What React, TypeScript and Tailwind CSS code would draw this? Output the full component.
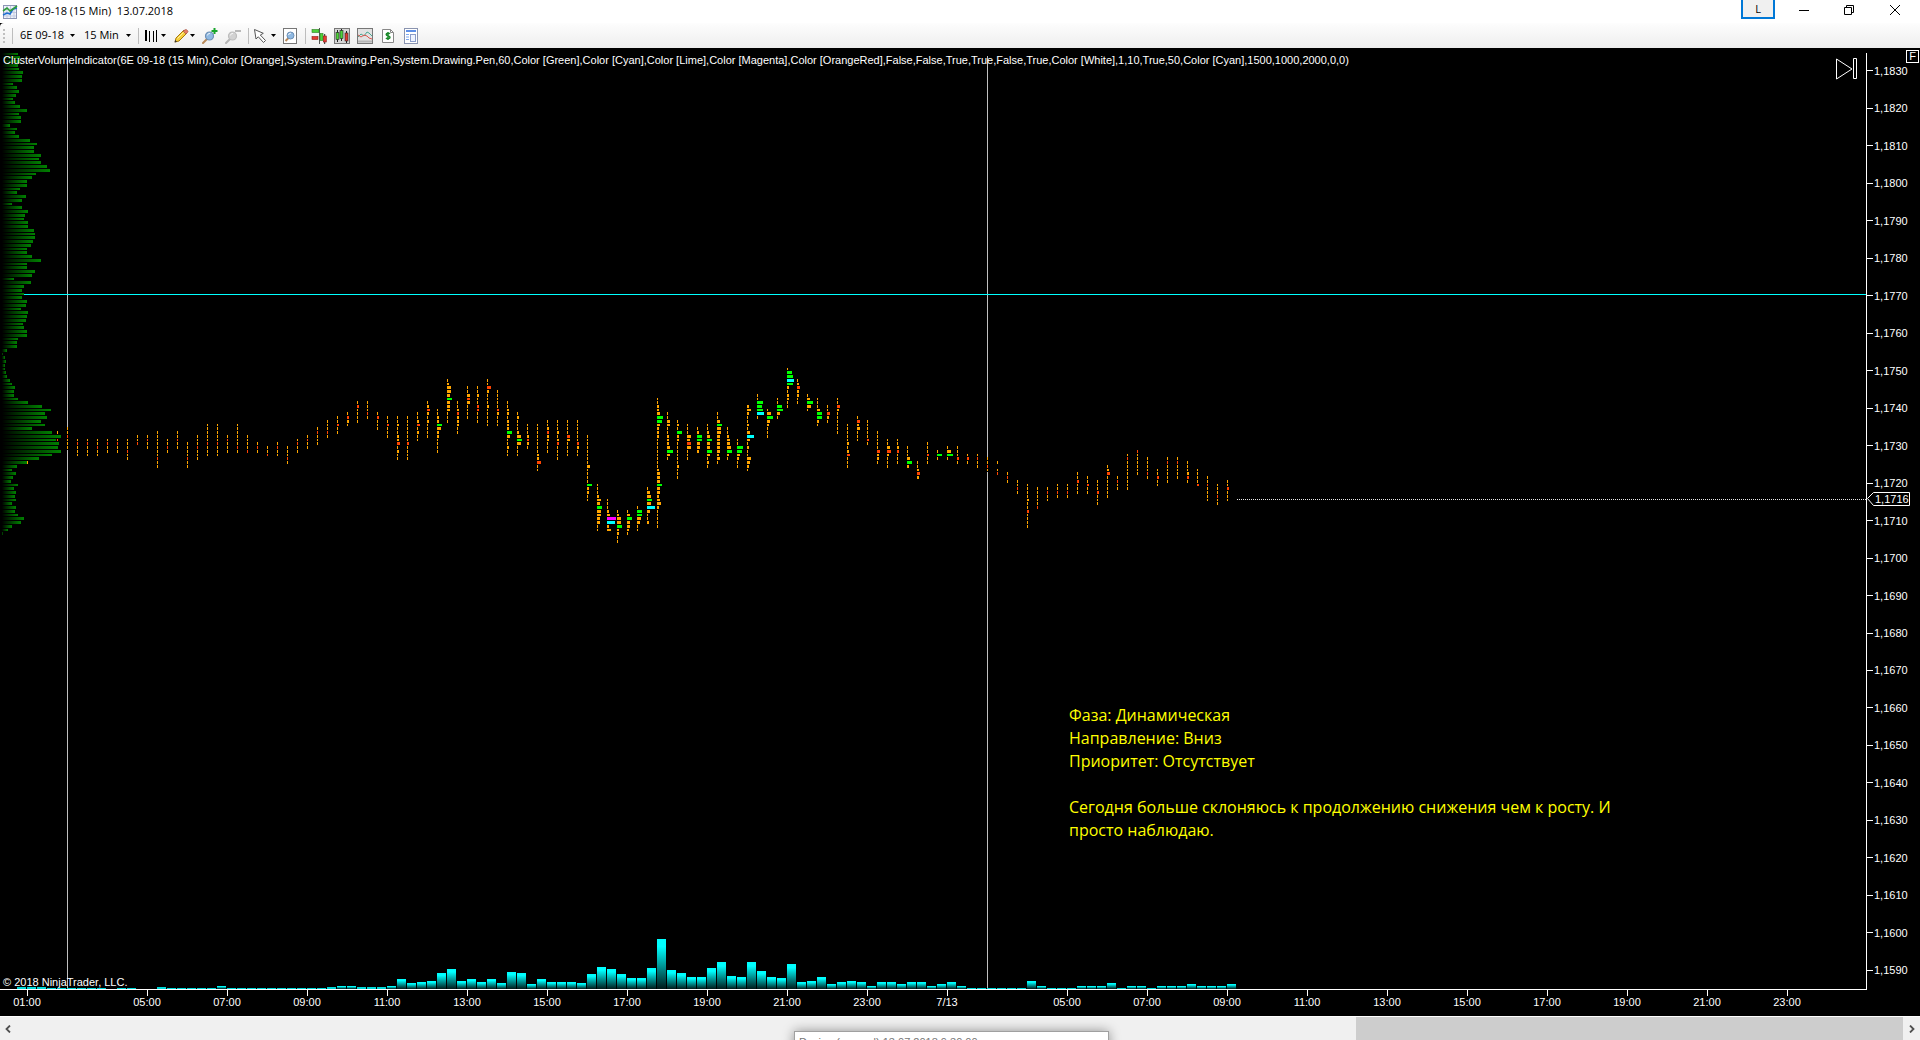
import React from 'react';

/* ---- Price grid ------------------------------------------------------- */

const TICK = 3.7473;
const rowTop = (k: number) => Math.floor(0.2525 + k * TICK);
const rowHeight = (k: number) => rowTop(k + 1) - rowTop(k) - 1;
const PLOT_BOTTOM = 936;

const PRICES = Array.from({ length: 25 }, (_, i) => '1,' + (1830 - i * 10));

/* Right edge of every volume profile bar, one value for each price row. */
const PROFILE = [
  18, 20, 20, 18, 19, 23, 22, 22, 13, 17, 19, 16, 13, 15, 20, 27, 19, 21, 21, 10, 17, 15, 19, 30,
  37, 34, 34, 41, 39, 41, 47, 50, 36, 32, 27, 27, 20, 17, 26, 22, 12, 22, 28, 25, 24, 28, 28, 34,
  35, 35, 33, 31, 27, 27, 32, 41, 27, 27, 35, 32, 14, 31, 24, 22, 24, 22, 27, 26, 21, 28, 27, 26,
  23, 24, 27, 27, 18, 17, 17, 7, 3, 5, 6, 5, 5, 6, 7, 10, 12, 15, 14, 14, 18, 28, 42, 51, 45, 47,
  41, 45, 32, 52, 61, 56, 59, 58, 61, 52, 39, 27, 17, 12, 16, 13, 11, 18, 14, 16, 15, 16, 12, 16,
  15, 18, 24, 21, 12, 8, 3,
];

/* Cluster codes: digits are orange widths, letters add the other colours. */
const CELLS: Record<string, [number, string]> = {
  '1': [1, '#ffa500'],
  '2': [2, '#ffa500'],
  '3': [3, '#ffa500'],
  '4': [4, '#ffa500'],
  a: [1, '#ff4500'],
  b: [2, '#ff4500'],
  c: [3, '#ff4500'],
  d: [4, '#ff4500'],
  e: [5, '#00ff00'],
  f: [6, '#00ff00'],
  x: [7, '#00ffff'],
  y: [8, '#00ffff'],
  m: [9, '#ff00ff'],
};

/* Fifteen minute bars: first price row and the clusters below it. */
const BARS: [number, string][] = [
  [101, '11a'], [100, '11a111'], [103, '1a111'], [103, '1a111'], [103, '11a11'], [103, '1a11'],
  [103, '1a11'], [103, '111a11'], [102, '11a'], [102, '1a11'], [101, '1111111a11'], [103, '11a1'],
  [101, '11a11'], [104, '1111a11'], [102, '111a111'], [99, '11111a111'], [99, '11111a111'],
  [102, '1a111'], [99, '111111a1'], [102, '1111a'], [104, '1a1'], [105, '11a'], [104, '1a11'],
  [105, '111a1'], [103, '1a11'], [102, '1a11'], [100, '1a111'], [98, '111a1'], [97, '11b11'],
  [96, '1b21'], [93, '1b1111'], [93, '111a1'], [96, '1b111'], [97, '11b111'], [97, '1121122c1211'],
  [97, '1111111b1111'], [96, '112c1211'], [93, '12c2121111'], [95, '1122e4221111'],
  [87, '12443e333111'], [93, '112b22211'], [89, '113c31111'], [89, '11211bb111'],
  [87, '11d2111211111'], [90, '11111b2111'], [93, '11221222e311211'], [96, '1211124e4111'],
  [99, '1112b21'], [99, '1111111122d11'], [98, '112b22111'], [98, '111212b1111'],
  [98, '1111c31111'], [98, '111111b211'], [102, '1111111131111e2211'], [115, '111243e443311'],
  [119, '11123my24'], [122, '1244e2211'], [122, '13e3321'], [121, '1ee4311'], [116, '134e4y3112'],
  [92, '11223fe3222111111112333e33234211111'], [96, '1133112223f31'], [98, '121e221111112111'],
  [99, '11143d4111'], [100, '12ee332'], [99, '1123e33e3121'], [96, '113e4433333231'],
  [100, '112334e21'], [103, '11fe3211'], [94, '24211213x312114321'], [91, '11fefx1'],
  [95, '14f32111'], [92, '11ef31'], [84, '1efxf212211'], [87, '12c2211'], [91, '13f41'],
  [92, '1113ee21'], [94, '11c21'], [92, '11c2111111'], [99, '11111212c111'], [97, '1c23111'],
  [98, '11111b1'], [101, '11111c221'], [103, '113d2111'], [103, '112b111'], [105, '1113e2'],
  [109, '112c2'], [104, '111b11'], [106, '1e1'], [105, '14f1'], [105, '111b1'], [107, '1b1'],
  [107, '1a11'], [108, '11a1'], [109, '1.1a'], [112, '1a1'], [114, '11a1'], [115, '1111211b1111'],
  [116, '11111a'], [116, '1a11'], [115, '11a1'], [115, '11a1'], [112, '11b111'], [113, '11b11'],
  [114, '111b111'], [110, '12c111111'], [113, '1a11'], [107, '1a11111111'], [106, 'a111111'],
  [108, '1111a1'], [111, '11b11'], [108, '1a11111'], [108, '1a1111'], [109, '1112b1'],
  [111, '1111b'], [113, '11a1111'], [115, '111a11'], [114, '11b111'],
];

/* Volume column heights; the first column stands four bars before BARS[0]. */
const VOLUMES = [
  2, 2, 2, 1, 1, 1, 1, 1, 1, 0, 1, 1, 0, 0, 2, 1, 1, 1, 1, 1, 3, 1, 1, 1, 1, 1, 1, 1, 1, 1, 1, 2,
  3, 3, 2, 2, 2, 3, 10, 6, 7, 8, 16, 20, 8, 10, 7, 10, 6, 17, 16, 5, 10, 7, 7, 7, 6, 15, 22, 20,
  15, 11, 11, 21, 50, 19, 16, 12, 12, 21, 27, 13, 12, 27, 18, 12, 11, 25, 7, 8, 12, 5, 7, 8, 7, 3,
  7, 7, 5, 7, 7, 3, 5, 7, 3, 1, 1, 1, 1, 1, 1, 8, 3, 1, 1, 1, 3, 3, 3, 6, 1, 3, 3, 1, 3, 3, 3, 5,
  3, 3, 3, 5,
];

const TIMES: [string, string][] = [
  ['01:00', 'w-[54px] mr-[53px]'],
  ['05:00', 'w-20'], ['07:00', 'w-20'], ['09:00', 'w-20'], ['11:00', 'w-20'], ['13:00', 'w-20'],
  ['15:00', 'w-20'], ['17:00', 'w-20'], ['19:00', 'w-20'], ['21:00', 'w-20'], ['23:00', 'w-20'],
  ['7/13', 'w-20 mr-10'],
  ['05:00', 'w-20'], ['07:00', 'w-20'], ['09:00', 'w-20'], ['11:00', 'w-20'], ['13:00', 'w-20'],
  ['15:00', 'w-20'], ['17:00', 'w-20'], ['19:00', 'w-20'], ['21:00', 'w-20'], ['23:00', 'w-20'],
];

const INDICATOR =
  'ClusterVolumeIndicator(6E 09-18 (15 Min),Color [Orange],System.Drawing.Pen,System.Drawing.Pen,60,Color [Green],Color [Cyan],Color [Lime],Color [Magenta],Color [OrangeRed],False,False,True,True,False,True,Color [White],1,10,True,50,Color [Cyan],1500,1000,2000,0,0)';

/* ---- Icons ------------------------------------------------------------ */

function Icon({ children, size = 16 }: { children: React.ReactNode; size?: number }) {
  return (
    <svg width={size} height={size} viewBox="0 0 16 16" fill="none" aria-hidden="true" className="shrink-0">
      {children}
    </svg>
  );
}

const AppIcon = () => (
  <Icon>
    <rect x="1.5" y="1.5" width="13" height="13" fill="#eef2fa" stroke="#8d96b5" />
    <path d="M5 2v12M8.5 2v12M12 2v12M2 5h12M2 8.5h12M2 12h12" stroke="#c3cbe0" />
    <path d="M1 11l4-2 3 1 3-5 4-1" stroke="#1f6fd0" strokeWidth="1.6" />
    <path d="M1 7l4-3 3 3 3-2 4-3" stroke="#2f9e3a" strokeWidth="1.6" />
  </Icon>
);

const BarsIcon = () => (
  <Icon>
    <path d="M2 2h2v11H2zM6 3h1v11H6zM10 3h1v11h-1zM13 2h1v12h-1z" fill="#000" shapeRendering="crispEdges" />
  </Icon>
);

const PencilIcon = () => (
  <Icon>
    <path d="M2 14l1-4 8-8 3 3-8 8z" fill="#f6cf3c" stroke="#a8780c" />
    <path d="M10 3l3 3 1.700-1.700c.6-.6.3-1.200-.3-1.900s-1.700-1.200-2.400-.5z" fill="#e57b66" stroke="#a5574a" strokeWidth=".7" />
    <path d="M4.500 10.500l6-6" stroke="#fff0a0" />
    <path d="M1.500 14.500l.8-2.500 1.700 1.700z" fill="#333" />
  </Icon>
);

function Lens({ grey }: { grey?: boolean }) {
  return (
    <>
      <path d="M1 15l4-4" stroke={grey ? '#b5b5b5' : '#b98a5a'} strokeWidth="2" strokeLinecap="round" />
      <circle cx="7.500" cy="8" r="4" fill={grey ? '#d2d2d2' : '#8fb9e2'} stroke={grey ? '#bdbdbd' : '#6d8fb5'} strokeWidth="1.200" />
      <path d="M5.300 7.500a2.600 2.600 0 0 1 2.800-2.100" stroke="#fff" strokeOpacity=".8" />
    </>
  );
}

const ZoomInIcon = () => (
  <Icon>
    <Lens />
    <path d="M12.500 0v6M9.500 3h6" stroke="#18a52c" strokeWidth="2" />
  </Icon>
);

const ZoomOutIcon = () => (
  <Icon>
    <Lens grey />
    <path d="M10 3h6" stroke="#b9b9b9" strokeWidth="2" />
  </Icon>
);

const CursorIcon = () => (
  <Icon>
    <path d="M1.500 1.500l1.500 9.500 2.300-2.200 5.200 5.700 2-2-5.200-5.500 3-1.700z" fill="#fff" stroke="#555" strokeLinejoin="round" />
  </Icon>
);

const PageLensIcon = () => (
  <Icon>
    <rect x="1.500" y=".5" width="13" height="15" fill="#fff" stroke="#777" />
    <path d="M3.500 13l3-3" stroke="#b98a5a" strokeWidth="2" />
    <circle cx="8.500" cy="7.500" r="3.500" fill="#8fb9e2" stroke="#6d8fb5" />
    <path d="M6.500 7a2.200 2.200 0 0 1 2.300-1.700" stroke="#fff" />
  </Icon>
);

const TraderIcon = () => (
  <Icon>
    <path d="M8.500 0v16" stroke="#555" />
    <rect x="1" y="1.500" width="7" height="3" fill="#4fd13b" stroke="#2b7d20" strokeWidth=".6" />
    <rect x="1" y="8.500" width="6" height="3" fill="#e23b32" stroke="#8e1b15" strokeWidth=".6" />
    <rect x="9" y="5.500" width="3" height="7" fill="#4fd13b" stroke="#2b7d20" strokeWidth=".6" />
    <path d="M13.700 6v10" stroke="#222" />
    <rect x="12.300" y="8" width="3" height="6" fill="#e23b32" stroke="#8e1b15" strokeWidth=".6" />
  </Icon>
);

const CandlesIcon = () => (
  <Icon>
    <rect x=".5" y=".5" width="15" height="15" fill="#d6d6d6" stroke="#777" />
    <path d="M3.500 2v12M7.500 1v12M12.500 3v12" stroke="#222" />
    <rect x="2" y="4.500" width="3" height="7" fill="#4fd13b" stroke="#222" strokeWidth=".6" />
    <rect x="6" y="2.500" width="3" height="8" fill="#4fd13b" stroke="#222" strokeWidth=".6" />
    <rect x="11" y="5" width="3" height="8" fill="#e23b32" stroke="#222" strokeWidth=".6" />
  </Icon>
);

const IndicatorsIcon = () => (
  <Icon>
    <rect x=".5" y=".5" width="15" height="15" fill="#e2e2e2" stroke="#777" />
    <path d="M1 9l3-3 3 2 3-4 2 1 3 3" stroke="#49a892" />
    <path d="M1 7l3 2 3-2 3 1 2 2 3 1" stroke="#e0574f" />
    <path d="M1 13.500h14" stroke="#b5b5b5" strokeWidth="2" />
  </Icon>
);

const DollarIcon = () => (
  <Icon>
    <path d="M2.500 1.500h8l3 3v10h-11z" fill="#fff" stroke="#888" />
    <path d="M10.500 1.500v3h3" stroke="#888" />
    <path d="M10 5.800c-.6-.7-3.800-1-3.800.8 0 1.700 3.800.9 3.800 2.700 0 1.800-3.200 1.600-4 .7M8 4v8" stroke="#1b8a2b" strokeWidth="1.500" />
  </Icon>
);

const PropertiesIcon = () => (
  <Icon>
    <rect x="1.500" y=".5" width="13" height="15" fill="#fff" stroke="#8a94b0" />
    <rect x="3" y="2" width="10" height="2" fill="#5d8fe8" />
    <path d="M3 6.500h3M3 9h3M3 11.500h3" stroke="#7da7ef" />
    <rect x="7.500" y="6.500" width="5" height="7" fill="#eef3ff" stroke="#8a9cc9" />
  </Icon>
);

const Caret = () => (
  <svg width="5" height="3" viewBox="0 0 5 3" aria-hidden="true" className="shrink-0">
    <path d="M0 0h5L2.500 3z" fill="#000" />
  </svg>
);

const Separator = () => <span className="h-4 w-px shrink-0 bg-[#bdbdbd]" />;

function Tool({ label, children, className = '' }: { label: string; children: React.ReactNode; className?: string }) {
  return (
    <button type="button" aria-label={label} title={label} className={`flex h-5 items-center ${className}`}>
      {children}
    </button>
  );
}

/* ---- Window parts ----------------------------------------------------- */

function TitleBar() {
  return (
    <header className="flex h-[23px] shrink-0 items-center bg-white pl-0.5 text-black">
      <AppIcon />
      <h1 className="ml-[5px] whitespace-pre font-['Open_Sans',sans-serif] text-[11px]">6E 09-18 (15 Min)  13.07.2018</h1>
      <div className="ml-auto flex h-full items-start">
        <button type="button" className="h-[19px] w-[34px] border-2 border-t-0 border-[#0078d7] bg-[#f0f0f0] font-['Open_Sans',sans-serif] text-[11px] leading-4">
          L
        </button>
        <button type="button" aria-label="Minimize" className="ml-[6px] flex h-5 w-[46px] items-center justify-center">
          <svg width="10" height="10"><path d="M0 5.500h10" stroke="#000" /></svg>
        </button>
        <button type="button" aria-label="Restore" className="flex h-5 w-[44px] items-center justify-center">
          <svg width="10" height="10" fill="none" stroke="#000"><path d="M.5 2.500h7v7h-7zM2.500 2.500v-2h7v7h-2" /></svg>
        </button>
        <button type="button" aria-label="Close" className="mr-px flex h-5 w-12 items-center justify-center">
          <svg width="10" height="10" stroke="#000"><path d="M0 0l10 10M10 0L0 10" /></svg>
        </button>
      </div>
    </header>
  );
}

function Toolbar() {
  return (
    <nav aria-label="Chart toolbar" className="flex h-[25px] shrink-0 items-center rounded-tl bg-linear-to-b from-[#fdfdfd] to-[#eeeeee] pl-[3px] font-['Open_Sans',sans-serif] text-[11px] text-black">
      <span className="flex flex-col gap-0.5">
        <i className="size-0.5 bg-[#c0c0c0]" />
        <i className="size-0.5 bg-[#c0c0c0]" />
        <i className="size-0.5 bg-[#c0c0c0]" />
        <i className="size-0.5 bg-[#c0c0c0]" />
      </span>
      <span className="ml-[7px] flex"><Separator /></span>
      <Tool label="Instrument" className="ml-[7px] w-16 gap-1"><span className="w-[46px] whitespace-nowrap text-left">6E 09-18</span><Caret /></Tool>
      <Tool label="Period" className="w-[54px] gap-1"><span className="w-[38px] whitespace-nowrap text-left">15 Min</span><Caret /></Tool>
      <Separator />
      <Tool label="Chart style" className="ml-1 gap-0.5"><BarsIcon /><Caret /></Tool>
      <Tool label="Drawing tools" className="ml-[7px] gap-px"><PencilIcon /><Caret /></Tool>
      <Tool label="Zoom in" className="ml-[7px]"><ZoomInIcon /></Tool>
      <Tool label="Zoom out" className="mx-[7px]"><ZoomOutIcon /></Tool>
      <Separator />
      <Tool label="Cursor" className="ml-1 gap-0.5"><CursorIcon /><Caret /></Tool>
      <Tool label="Data box" className="ml-1.5 mr-[7px]"><PageLensIcon /></Tool>
      <Separator />
      <Tool label="Chart trader" className="ml-[5px]"><TraderIcon /></Tool>
      <Tool label="Data series" className="ml-[7px]"><CandlesIcon /></Tool>
      <Tool label="Indicators" className="ml-[7px]"><IndicatorsIcon /></Tool>
      <Tool label="Strategies" className="ml-[7px]"><DollarIcon /></Tool>
      <Tool label="Properties" className="ml-[7px]"><PropertiesIcon /></Tool>
    </nav>
  );
}

function Plot() {
  return (
    <svg className="absolute inset-0 size-full" shapeRendering="crispEdges" role="img" aria-label="Price clusters and volume">
      <defs>
        <linearGradient id="profile" x1="0" x2="1" y1="0" y2="0">
          <stop offset="0" stopColor="#000" />
          <stop offset="1" stopColor="#008000" />
        </linearGradient>
        <linearGradient id="volume" x1="0" x2="0" y1="0" y2="1">
          <stop offset="0" stopColor="#0ff" />
          <stop offset=".15" stopColor="#0ff" />
          <stop offset="1" stopColor="#001818" />
        </linearGradient>
      </defs>
      <rect x="67" y="3" width="1" height={PLOT_BOTTOM - 3} fill="#c0c0c0" />
      <rect x="987" y="3" width="1" height={PLOT_BOTTOM - 3} fill="#c0c0c0" />
      <rect x="24" y="241" width="100%" height="1" fill="#0ff" />
      <rect x="27" y={rowTop(109)} width="1" height={rowHeight(109)} fill="#ffa500" />
      {BARS.map(([start, cells], n) => (
        <g key={n}>
          <rect x={57 + n * 10} y={rowTop(start)} width="1" height={rowTop(start + cells.length) - rowTop(start)} fill="#000" />
          {cells.split('').map((code, i) =>
            CELLS[code] ? (
              <rect key={i} x={57 + n * 10} y={rowTop(start + i)} width={CELLS[code][0]} height={rowHeight(start + i)} fill={CELLS[code][1]} />
            ) : null,
          )}
        </g>
      ))}
      {PROFILE.map((edge, k) => (
        <rect key={k} x="2" y={rowTop(k)} width={edge - 2} height={rowHeight(k)} fill="url(#profile)" />
      ))}
      {VOLUMES.map((h, i) => (
        <rect key={i} x={17 + i * 10} y={PLOT_BOTTOM - h} width="9" height={h} fill={h < 3 ? '#00d8d8' : 'url(#volume)'} />
      ))}
      <line x1="1237" x2="100%" y1="446.5" y2="446.5" stroke="#e8e8e8" strokeDasharray="1 1" />
    </svg>
  );
}

function Chart() {
  return (
    <main className="relative flex flex-1 flex-col bg-black pt-[5px] font-['Liberation_Sans',Arial,sans-serif] text-[11px] text-white">
      <div className="flex flex-1">
        <section className="relative flex-1 border-r border-b border-white">
          <Plot />
          <p className="absolute left-[3px] top-0 whitespace-nowrap leading-[14px]">{INDICATOR}</p>
          <p className="absolute bottom-0 left-[3px] whitespace-nowrap leading-[13px]">© 2018 NinjaTrader, LLC.</p>
          <div className="absolute left-[1069px] top-[651px] w-[570px] font-['Open_Sans',sans-serif] text-[16px] leading-[23px] text-[#ffff00]">
            <p>Фаза: Динамическая</p>
            <p>Направление: Вниз</p>
            <p>Приоритет: Отсутствует</p>
            <p className="mt-[23px]">Сегодня больше склоняюсь к продолжению снижения чем к росту. И<br />просто наблюдаю.</p>
          </div>
          <button type="button" aria-label="Scroll to last bar" className="absolute right-2 top-[5px]">
            <svg width="22" height="22" fill="none" stroke="#fff"><path d="M.5 1v20L16 11zM17.500 .5h3v20h-3z" /></svg>
          </button>
        </section>
        <aside aria-label="Price axis" className="relative -mt-px mb-px flex w-[53px] flex-col">
          {PRICES.map((price) => (
            <div key={price} className="flex flex-1 items-center gap-px">
              <span className="h-px w-1.5 bg-white" />
              <span className="leading-3">{price}</span>
            </div>
          ))}
          <div className="absolute left-0 top-[440px] h-[14px] w-[43px]">
            <svg width="43" height="14" className="absolute inset-0"><path d="M.5 6.500l6-6h36v13h-36z" fill="#000" stroke="#fff" /></svg>
            <span className="relative block pl-2 leading-[14px]">1,1716</span>
          </div>
        </aside>
      </div>
      <div aria-label="Time axis" className="flex h-[26px] overflow-hidden">
        {TIMES.map(([time, width], i) => (
          <div key={i} className={`flex shrink-0 flex-col items-center ${width}`}>
            <span className="h-1.5 w-px bg-white" />
            <span className="leading-[13px]">{time}</span>
          </div>
        ))}
      </div>
      <button type="button" className="absolute right-px top-0.5 size-[13px] border border-white text-[11px] leading-[11px]">F</button>
    </main>
  );
}

function ScrollBar() {
  return (
    <footer className="relative flex h-6 shrink-0 overflow-hidden border-t border-white bg-[#f0f0f0]">
      <button type="button" aria-label="Scroll left" className="flex w-4 items-center justify-center">
        <svg width="6" height="8" fill="none" stroke="#505050" strokeWidth="1.800"><path d="M5 .5L1.500 4 5 7.500" /></svg>
      </button>
      <div className="flex flex-1 justify-end">
        <div className="w-[29%] bg-[#cdcdcd]" />
      </div>
      <button type="button" aria-label="Scroll right" className="flex w-[17px] items-center justify-center">
        <svg width="6" height="8" fill="none" stroke="#505050" strokeWidth="1.800"><path d="M1 .5L4.500 4 1 7.500" /></svg>
      </button>
      <div className="absolute left-[794px] top-[14px] h-6 w-[315px] border border-[#a0a0a0] bg-white pl-1 pt-0.5 font-['Liberation_Sans',sans-serif] text-[11px] leading-4 text-[#777777] shadow-[0_0_12px_rgba(0,0,0,0.4)]">
        Design (manual) 13.07.2018 9:30:00
      </div>
    </footer>
  );
}

export default function App() {
  return (
    <div className="flex h-screen min-h-[1040px] flex-col overflow-hidden bg-black">
      <TitleBar />
      <Toolbar />
      <Chart />
      <ScrollBar />
    </div>
  );
}
